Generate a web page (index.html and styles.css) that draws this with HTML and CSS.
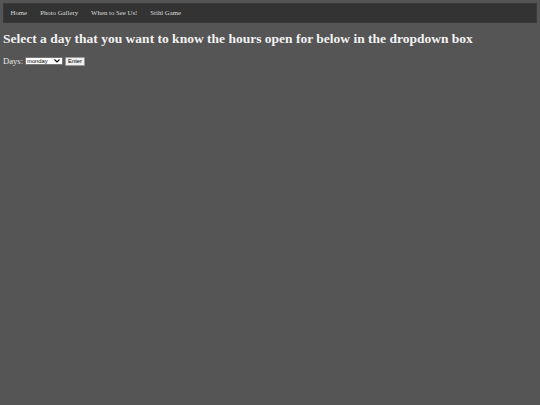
FILE: index.html
```html
<!DOCTYPE html>
<html>
<head>
<meta charset="utf-8">
<link rel="stylesheet" href="styles.css">
</head>
<body>
<ul class="nav">
  <li><a href="#">Home</a></li>
  <li><a href="#">Photo Gallery</a></li>
  <li><a href="#">When to See Us!</a></li>
  <li><a href="#">Stihl Game</a></li>
</ul>
<h1 class="title">Select a day that you want to know the hours open for below in the dropdown box</h1>
<form class="days">
  <label class="days-label">Days:</label>
  <span class="select-wrap">
    <select class="days-select">
      <option>monday</option>
    </select>
    <svg class="select-arrow" width="6" height="4" viewBox="0 0 6 4"><path d="M0.5 0.5 L3 3 L5.5 0.5" fill="none" stroke="#000" stroke-width="1.1"/></svg>
  </span>
  <button type="button" class="enter">Enter</button>
</form>
</body>
</html>
```
FILE: styles.css
```css
html, body {
  margin: 0;
  padding: 0;
  background: #555555;
  height: 100%;
}
body {
  padding: 3px;
  box-sizing: border-box;
  font-family: "Liberation Serif", "Times New Roman", serif;
  color: #f0f0f0;
}
.nav {
  list-style: none;
  margin: 0;
  padding: 0;
  display: flex;
  background: #333333;
  border: 1px solid #3a3a3a;
  height: 18px;
  align-items: center;
}
.nav li a {
  display: block;
  color: #dcdcdc;
  font-weight: normal;
  text-decoration: none;
  font-size: 6.8px;
  line-height: 8px;
  padding: 0 6.5px 1px;
}
.title {
  margin: 8px 0 0 0;
  font-size: 13.5px;
  font-weight: bold;
  color: #f2f2f2;
  line-height: 16px;
}
.days {
  margin-top: 9px;
  display: flex;
  align-items: center;
  font-size: 8.6px;
  color: #e6e6e6;
}
.days-label {
  margin-right: 2px;
}
.select-wrap {
  position: relative;
  display: inline-block;
  margin-right: 2px;
}
.days-select {
  appearance: none;
  -webkit-appearance: none;
  display: block;
  font-family: "Liberation Sans", Arial, sans-serif;
  font-size: 5.8px;
  width: 38px;
  height: 8px;
  padding: 0 0 0 1px;
  margin: 0;
  border: 1px solid #767676;
  border-radius: 1px;
  background: #fff;
  color: #000;
  line-height: 6px;
}
.select-arrow {
  position: absolute;
  right: 3px;
  top: 2px;
  pointer-events: none;
}
.enter {
  font-family: "Liberation Sans", Arial, sans-serif;
  font-size: 5.8px;
  height: 9px;
  padding: 0 2px;
  border: 1px solid #999;
  background: #efefef;
  color: #000;
  border-radius: 1px;
  line-height: 6px;
}
```
